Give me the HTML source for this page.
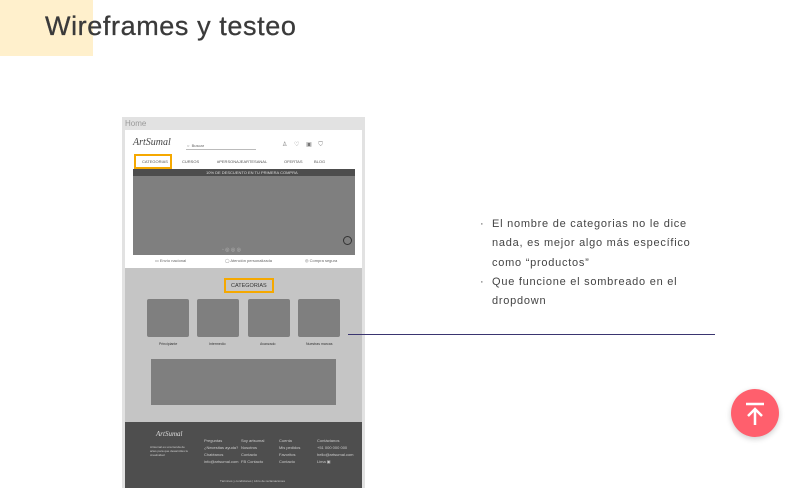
<!DOCTYPE html>
<html><head><meta charset="utf-8"><style>
*{margin:0;padding:0;box-sizing:border-box}
body{width:788px;height:488px;background:#fff;position:relative;overflow:hidden;font-family:"Liberation Sans",sans-serif}
.a{position:absolute}
.t{font-size:4px;color:#333}
.ft{font-size:4px;color:#ccc}
</style></head><body>
<div class="a" style="left:0;top:0;width:93px;height:56px;background:#fff0cc"></div>
<div class="a" style="left:45px;top:11px;font-size:27px;color:#3a3a3a;letter-spacing:0.6px;-webkit-text-stroke:0.3px #3a3a3a">Wireframes y testeo</div>

<div class="a" style="left:122px;top:117px;width:243px;height:371px;background:#e2e2e2"></div>
<div class="a" style="left:125px;top:119px;font-size:8px;color:#999">Home</div>
<div class="a" style="left:125px;top:130px;width:237px;height:358px;background:#c5c5c5"></div>
<div class="a" style="left:125px;top:130px;width:237px;height:138px;background:#fff"></div>
<div class="a" style="left:133px;top:137px;font-size:10px;font-style:italic;font-family:'Liberation Serif',serif;color:#444">ArtSumal</div>
<div class="a" style="left:187px;top:143px;font-size:4px;color:#666">○ &nbsp;Buscar</div>
<div class="a" style="left:186px;top:149px;width:70px;height:1px;background:#bbb"></div>
<div class="a t" style="left:282px;top:141px;font-size:6px;color:#777">♙ &nbsp;&nbsp;&nbsp;♡ &nbsp;&nbsp;&nbsp;▣ &nbsp;&nbsp;&nbsp;⛉</div>
<div class="a" style="left:134px;top:154px;width:38px;height:15px;border:2px solid #f5a800"></div>
<div class="a t" style="left:142px;top:159px;color:#555">CATEGORIAS</div>
<div class="a t" style="left:182px;top:159px;color:#555">CURSOS</div>
<div class="a t" style="left:217px;top:159px;color:#555">#PERSONAJEARTESANAL</div>
<div class="a t" style="left:284px;top:159px;color:#555">OFERTAS</div>
<div class="a t" style="left:314px;top:159px;color:#555">BLOG</div>
<div class="a" style="left:133px;top:169px;width:222px;height:86px;background:#7f7f7f"></div>
<div class="a" style="left:133px;top:169px;width:222px;height:7px;background:#4d4d4d"></div>
<div class="a" style="left:206px;top:170px;font-size:4px;color:#ddd">10% DE DESCUENTO EN TU PRIMERA COMPRA</div>
<div class="a" style="left:343px;top:236px;width:9px;height:9px;border:1px solid #333;border-radius:50%"></div>
<div class="a" style="left:222px;top:247px;font-size:5px;color:#bbb">◦ ◎ ◎ ◎</div>
<div class="a" style="left:155px;top:258px;font-size:4px;color:#666">▭ Envío nacional</div>
<div class="a" style="left:225px;top:258px;font-size:4px;color:#666">◯ Atención personalizada</div>
<div class="a" style="left:305px;top:258px;font-size:4px;color:#666">◎ Compra segura</div>

<div class="a" style="left:224px;top:278px;width:50px;height:15px;border:2px solid #f5a800"></div>
<div class="a" style="left:231px;top:283px;font-size:5.5px;color:#333">CATEGORIAS</div>
<div class="a" style="left:147px;top:299px;width:42px;height:38px;background:#7f7f7f;border-radius:2px"></div>
<div class="a" style="left:197px;top:299px;width:42px;height:38px;background:#7f7f7f;border-radius:2px"></div>
<div class="a" style="left:248px;top:299px;width:42px;height:38px;background:#7f7f7f;border-radius:2px"></div>
<div class="a" style="left:298px;top:299px;width:42px;height:38px;background:#7f7f7f;border-radius:2px"></div>
<div class="a" style="left:159px;top:342px;font-size:3.5px;color:#333">Principiante</div>
<div class="a" style="left:209px;top:342px;font-size:3.5px;color:#333">Intermedio</div>
<div class="a" style="left:260px;top:342px;font-size:3.5px;color:#333">Avanzado</div>
<div class="a" style="left:306px;top:342px;font-size:3.5px;color:#333">Nuestras marcas</div>
<div class="a" style="left:151px;top:359px;width:185px;height:46px;background:#7f7f7f"></div>

<div class="a" style="left:125px;top:422px;width:237px;height:66px;background:#4e4e4e"></div>
<div class="a" style="left:156px;top:430px;font-size:7px;font-style:italic;font-family:'Liberation Serif',serif;color:#ddd">ArtSumal</div>
<div class="a ft" style="left:150px;top:445px;width:40px;line-height:4px;font-size:3px">Artsumal es una tienda de artes para que desarrolles tu creatividad</div>
<div class="a ft" style="left:204px;top:437px;line-height:7px">Preguntas<br>¿Necesitas ayuda?<br>Chatéanos<br>info@artsumal.com</div>
<div class="a ft" style="left:241px;top:437px;line-height:7px">Soy artsumal<br>Nosotros<br>Contacto<br>FB Contacto</div>
<div class="a ft" style="left:279px;top:437px;line-height:7px">Cuenta<br>Mis pedidos<br>Favoritos<br>Contacto</div>
<div class="a ft" style="left:317px;top:437px;line-height:7px">Contáctanos<br>+51 000 000 000<br>hello@artsumal.com<br>Lima ▣</div>
<div class="a ft" style="left:220px;top:479px;font-size:3px">Términos y condiciones | Libro de reclamaciones</div>

<div class="a" style="left:348px;top:334px;width:367px;height:1px;background:#3a3570"></div>

<div class="a" style="left:480px;top:215px;font-size:11px;line-height:19.3px;color:#444;letter-spacing:0.75px">
<div>·&nbsp; El nombre de categorias no le dice</div>
<div style="padding-left:12px">nada, es mejor algo más específico</div>
<div style="padding-left:12px">como “productos”</div>
<div>·&nbsp; Que funcione el sombreado en el</div>
<div style="padding-left:12px">dropdown</div>
</div>

<div class="a" style="left:731px;top:389px;width:48px;height:48px;border-radius:50%;background:#ff5f6d;box-shadow:0 2px 6px rgba(0,0,0,0.2)">
<svg width="48" height="48" viewBox="0 0 48 48" style="position:absolute;left:0;top:0"><path d="M15 15H33M24 36V20M17 27L24 20L31 27" stroke="#fff" stroke-width="2.5" fill="none"/></svg>
</div>
</body></html>
